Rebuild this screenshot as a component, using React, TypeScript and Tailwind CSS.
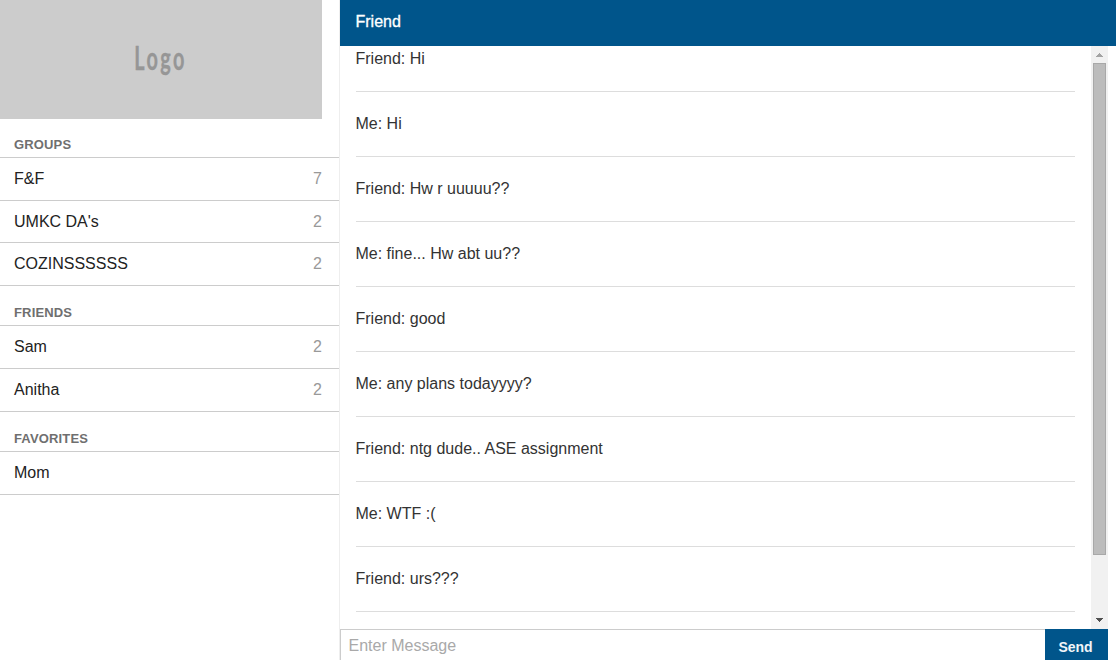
const sections = [
  {
    title: "Groups",
    head: "h-[39px]",
    rows: [
      { name: "F&F", count: 7, height: "h-[43px]" },
      { name: "UMKC DA's", count: 2, height: "h-[42px]" },
      { name: "COZINSSSSSS", count: 2, height: "h-[43px]" },
    ],
  },
  {
    title: "Friends",
    head: "h-[40px]",
    rows: [
      { name: "Sam", count: 2, height: "h-[43px]" },
      { name: "Anitha", count: 2, height: "h-[43px]" },
    ],
  },
  {
    title: "Favorites",
    head: "h-[40px]",
    rows: [{ name: "Mom", count: null, height: "h-[43px]" }],
  },
];

const messages = [
  "Friend: Hi",
  "Me: Hi",
  "Friend: Hw r uuuuu??",
  "Me: fine... Hw abt uu??",
  "Friend: good",
  "Me: any plans todayyyy?",
  "Friend: ntg dude.. ASE assignment",
  "Me: WTF :(",
  "Friend: urs???",
];

function Sidebar() {
  return (
    <aside className="w-[340px] shrink-0 border-r border-[#eeeeee]">
      <div className="h-[119px] w-[322px] bg-[#cccccc]">
        <svg width="322" height="119" role="img" aria-label="Logo">
          <g transform="translate(134.2 70) scale(0.62 1)">
            <text
              className="fill-[#969696] stroke-[#969696] stroke-[0.4px] font-['Lato',sans-serif] text-[32px] font-bold"
              textLength="81"
            >
              Logo
            </text>
          </g>
        </svg>
      </div>
      {sections.map((s) => (
        <section key={s.title}>
          <h2
            className={`${s.head} flex items-end border-b border-[#cccccc] pb-1 pl-3.5 text-[13px] leading-4 font-bold tracking-[0.15px] text-[#6f6f6f] uppercase`}
          >
            {s.title}
          </h2>
          <ul>
            {s.rows.map((r) => (
              <li
                key={r.name}
                className={`${r.height} flex items-center justify-between border-b border-[#cccccc] pr-[17px] pl-3.5 text-base text-[#222222]`}
              >
                <span>{r.name}</span>
                <span className="text-[#999999]">{r.count}</span>
              </li>
            ))}
          </ul>
        </section>
      ))}
    </aside>
  );
}

function Scrollbar() {
  return (
    <div className="flex w-[17px] flex-col items-center bg-[#f1f1f1]">
      <svg width="17" height="17" shapeRendering="crispEdges" className="shrink-0 fill-[#a3a3a3]">
        <path d="M8 7h1v1h1v1h1v1h1v1H5v-1h1V9h1V8h1z" />
      </svg>
      <div className="h-[492px] w-[13px] border border-[#a8a8a8] bg-[#bcbcbc]" />
      <svg width="17" height="17" shapeRendering="crispEdges" className="mt-auto shrink-0 fill-[#505050]">
        <path d="M5 6h7v1h-1v1h-1v1H9v1H8V9H7V8H6V7H5z" />
      </svg>
    </div>
  );
}

export default function App() {
  return (
    <div className="flex h-[660px] w-[1116px] overflow-hidden bg-white font-['Liberation_Sans',Arial,sans-serif]">
      <Sidebar />
      <main className="flex min-w-0 flex-1 flex-col">
        <header className="h-[46px] shrink-0 bg-[#00558b] pt-2.5 pl-[15.5px] text-base font-normal text-white [-webkit-text-stroke:0.3px_white]">
          Friend
        </header>
        <div className="flex h-[583px] w-[768px] shrink-0 overflow-hidden">
          <ul className="flex-1 pr-4 pl-4 text-base text-[#333333]">
            {messages.map((m, i) => (
              <li
                key={m}
                className={`${i === 0 ? "h-[46px]" : "h-[65px]"} flex items-end border-b border-[#dddddd] pb-5 leading-6`}
              >
                <span className="-ml-[0.5px]">{m}</span>
              </li>
            ))}
          </ul>
          <Scrollbar />
        </div>
        <div className="flex h-[31px] w-[768px] shrink-0">
          <input
            placeholder="Enter Message"
            className="min-w-0 flex-1 border-t border-l border-[#cccccc] pt-0.5 pl-[7.5px] text-base outline-none placeholder:text-[#a9a9a9]"
          />
          <button className="w-[63px] bg-[#00558b] pt-[5px] pr-1.5 pl-1 text-sm font-bold text-[#f0f5f9]">Send</button>
        </div>
      </main>
    </div>
  );
}
